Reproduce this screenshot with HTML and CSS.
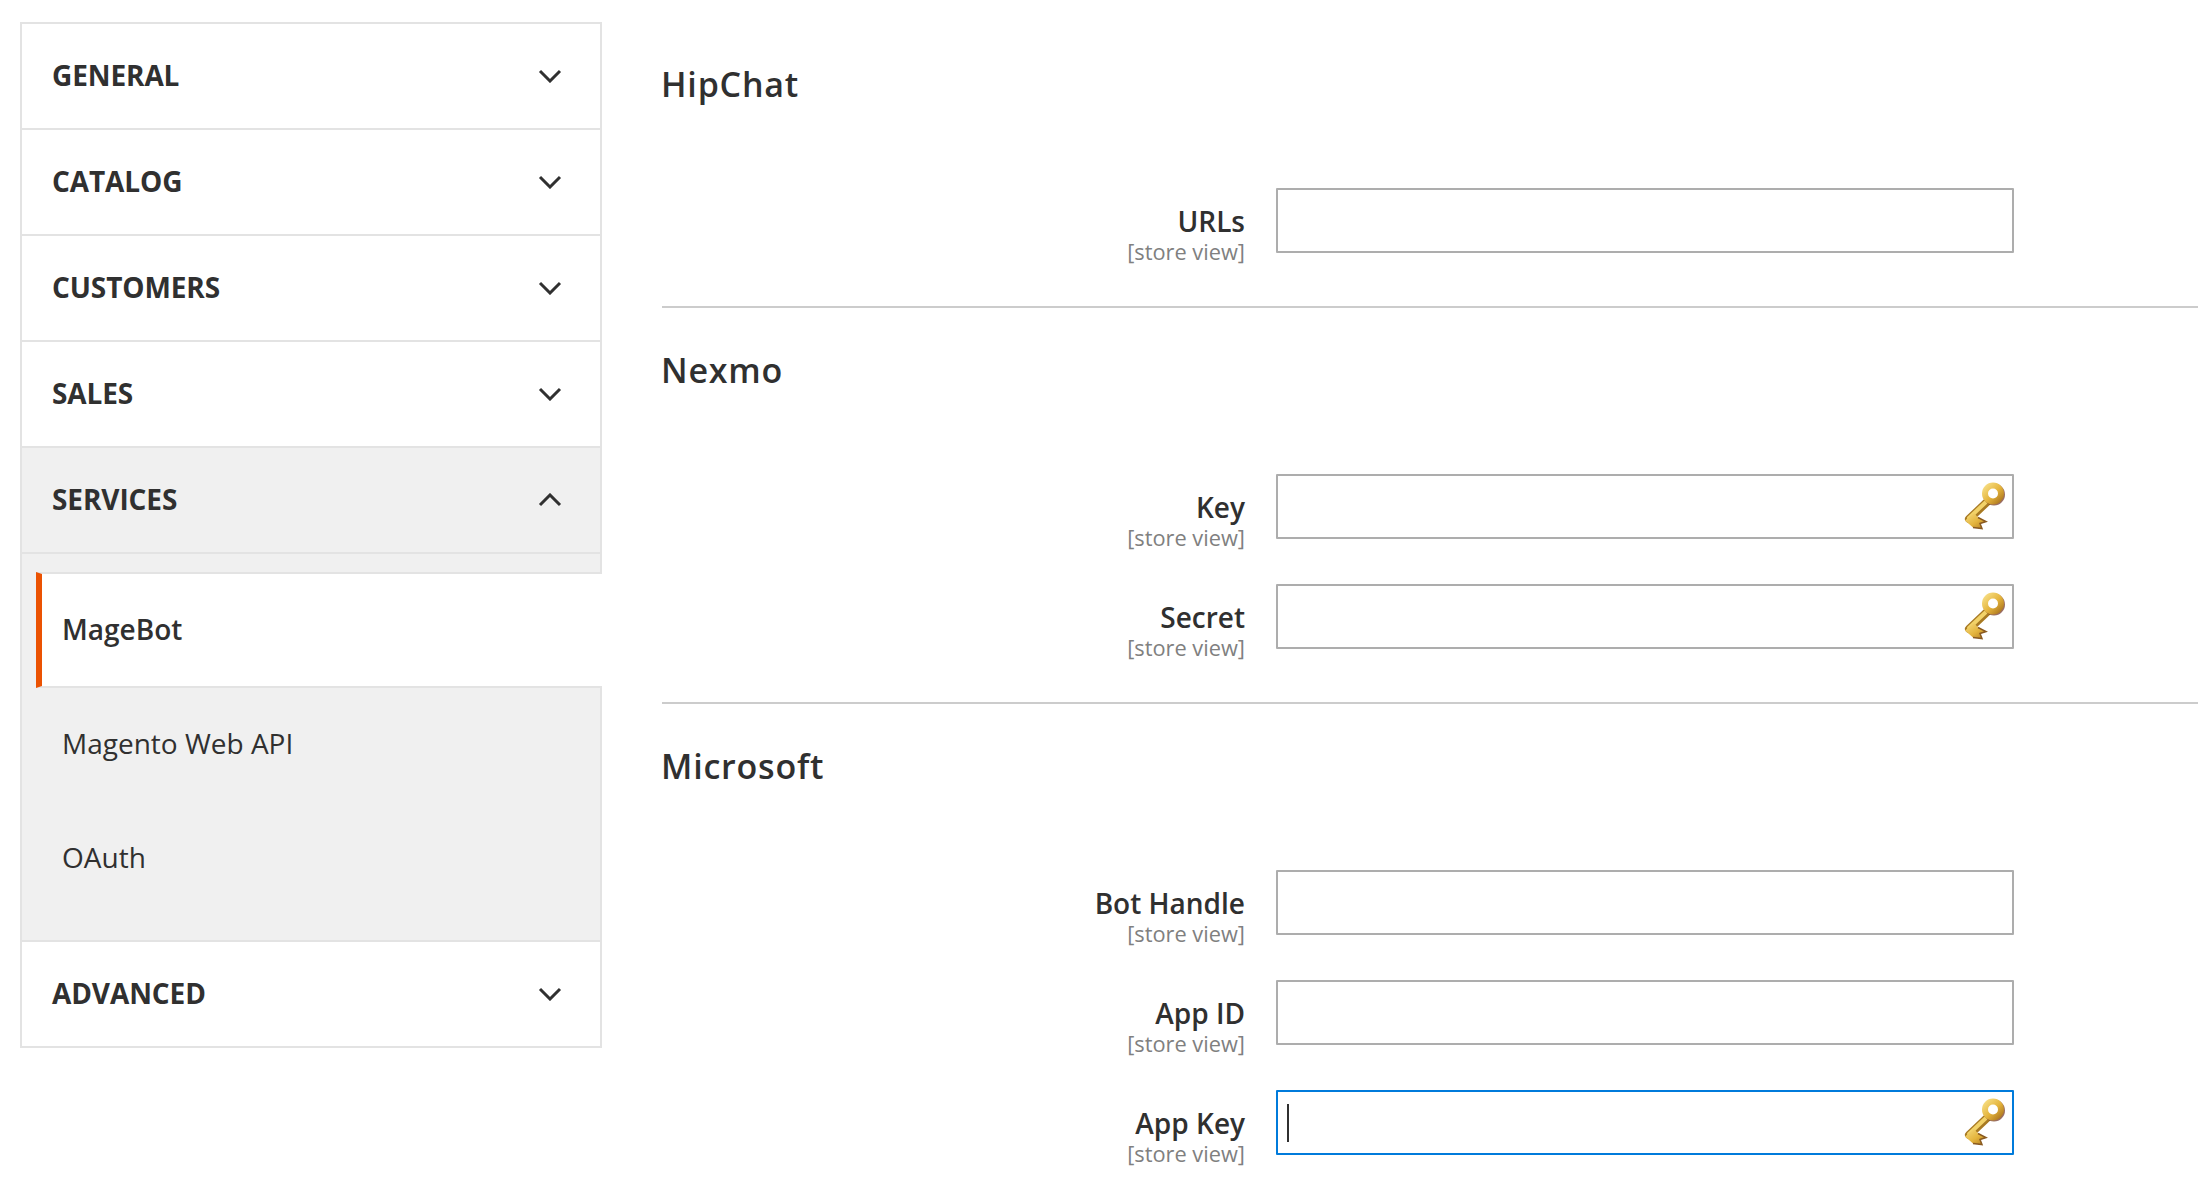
FILE: index.html
```html
<!DOCTYPE html>
<html>
  <head>
    <title>Configuration</title>
    <link rel="stylesheet" href="styles.css">
  </head>
  <body>
    <svg class="defs" width="0" height="0">
      <defs>
        <linearGradient id="keyGold" x1="0" y1="0" x2="1" y2="1">
          <stop offset="0" stop-color="#f6dc80" />
          <stop offset="0.55" stop-color="#e4b43c" />
          <stop offset="1" stop-color="#b07a20" />
        </linearGradient>
        <filter id="keySoft">
          <feGaussianBlur stdDeviation="0.5" />
        </filter>
        <symbol id="key" viewBox="0 0 44 50">
          <g filter="url(#keySoft)">
            <path d="M25 20 L7 37" stroke="#a87a24" stroke-width="8" stroke-linecap="round" />
            <path d="M24 20 L7 36" stroke="#f2d268" stroke-width="4" stroke-linecap="round" />
            <path d="M3 38.500 L12 31 L16 35.500 L24 39.500 L18 41.500 L20 46.500 L11 45.500 Z" fill="url(#keyGold)" />
            <path d="M16 35.500 L24 39.500 L18 41.500 L20 46.500 L11 45.500" fill="none" stroke="#8a5a20" stroke-width="1.500" />
            <circle cx="32" cy="12.500" r="9" fill="none" stroke="#6d2f22" stroke-width="4" opacity="0.7" />
            <circle cx="31" cy="11.500" r="8" fill="#fff" stroke="url(#keyGold)" stroke-width="6" />
          </g>
        </symbol>
      </defs>
    </svg>

    <div class="page">
      <div class="sidebar">
        <div class="nav-row">GENERAL <svg class="chevron"><path d="M2 2 L12 12 L22 2" /></svg></div>
        <div class="nav-row">CATALOG <svg class="chevron"><path d="M2 2 L12 12 L22 2" /></svg></div>
        <div class="nav-row">CUSTOMERS <svg class="chevron"><path d="M2 2 L12 12 L22 2" /></svg></div>
        <div class="nav-row">SALES <svg class="chevron"><path d="M2 2 L12 12 L22 2" /></svg></div>
        <div class="nav-row open">SERVICES <svg class="chevron"><path d="M2 12 L12 2 L22 12" /></svg></div>
        <ul class="submenu">
          <li class="active">MageBot</li>
          <li>Magento Web API</li>
          <li>OAuth</li>
        </ul>
        <div class="nav-row">ADVANCED <svg class="chevron"><path d="M2 2 L12 12 L22 2" /></svg></div>
      </div>

      <div class="main">
        <div class="section">
          <h2>HipChat</h2>
          <div class="form-row">
            <div class="label">URLs<span>[store view]</span></div>
            <div class="field"></div>
          </div>
        </div>

        <div class="section">
          <h2>Nexmo</h2>
          <div class="form-row">
            <div class="label">Key<span>[store view]</span></div>
            <div class="field"><svg class="key"><use href="#key" /></svg></div>
          </div>
          <div class="form-row">
            <div class="label">Secret<span>[store view]</span></div>
            <div class="field"><svg class="key"><use href="#key" /></svg></div>
          </div>
        </div>

        <div class="section last">
          <h2>Microsoft</h2>
          <div class="form-row">
            <div class="label">Bot Handle<span>[store view]</span></div>
            <div class="field"></div>
          </div>
          <div class="form-row">
            <div class="label">App ID<span>[store view]</span></div>
            <div class="field"></div>
          </div>
          <div class="form-row">
            <div class="label">App Key<span>[store view]</span></div>
            <div class="field focus"><i class="caret"></i><svg class="key"><use href="#key" /></svg></div>
          </div>
        </div>
      </div>
    </div>
  </body>
</html>
```

FILE: styles.css
```css
/* Base styles */
html,
body {
  height: 100%;
  overflow: hidden;
}

body {
  margin: 0;
  background: #fff;
  color: #303030;
  font-family: "Open Sans", "Noto Sans", sans-serif;
}

.defs {
  display: block;
}

.page {
  display: flex;
  align-items: flex-start;
  padding-left: 20px;
  padding-top: 22px;
}

/* Left menu */
.sidebar {
  box-sizing: border-box;
  flex: none;
  width: 582px;
  border: 2px solid #e3e3e3;
  border-bottom-width: 0;
}

.nav-row {
  box-sizing: border-box;
  display: flex;
  align-items: center;
  justify-content: space-between;
  height: 106px;
  padding: 0 38px 2px 30px;
  border-bottom: 2px solid #e3e3e3;
  font-size: 28px;
  font-weight: 700;
  letter-spacing: -0.1px;
}

.nav-row.open {
  background: #f0f0f0;
}

.chevron {
  width: 24px;
  height: 14px;
  margin-top: 2px;
}

.chevron path {
  fill: none;
  stroke: #303030;
  stroke-width: 3;
}

.submenu {
  margin: 0;
  padding: 18px 0 24px 14px;
  background: #f0f0f0;
  border-bottom: 2px solid #e3e3e3;
  list-style-type: none;
}

.submenu li {
  box-sizing: border-box;
  display: flex;
  align-items: center;
  height: 114px;
  padding-left: 26px;
  padding-bottom: 5px;
  font-size: 28px;
}

.submenu li.active {
  height: 116px;
  margin-right: -2px;
  padding-left: 20px;
  padding-bottom: 3px;
  background: #fff;
  border-left: 6px solid #eb5202;
  border-top: 2px solid #e3e3e3;
  border-bottom: 2px solid #e3e3e3;
  font-weight: 600;
}

/* Config sections */
.main {
  flex: 1;
  margin-left: 60px;
}

.section {
  padding-bottom: 53px;
  border-bottom: 2px solid #cccccc;
}

.section.last {
  border-bottom: none;
}

.section h2 {
  box-sizing: border-box;
  height: 166px;
  margin: 0 0 0 -1px;
  padding-top: 40px;
  font-size: 34px;
  font-weight: 600;
  line-height: 44px;
  letter-spacing: 0.8px;
}

.form-row {
  display: grid;
  grid-template-columns: 583px 738px;
  column-gap: 31px;
  height: 65px;
  margin-bottom: 45px;
}

.form-row:last-child {
  margin-bottom: 0;
}

.label {
  padding-top: 14px;
  font-size: 28px;
  font-weight: 600;
  line-height: 38px;
  text-align: right;
}

.label span {
  display: block;
  color: #808080;
  font-size: 21.8px;
  font-weight: 400;
  line-height: 23px;
}

.field {
  box-sizing: border-box;
  display: flex;
  align-items: center;
  justify-content: flex-end;
  height: 65px;
  padding-right: 6px;
  background: #fff;
  border: 2px solid #adadad;
  border-radius: 1px;
}

.field.focus {
  justify-content: space-between;
  padding-left: 9px;
  border-color: #007bdb;
}

.caret {
  width: 2px;
  height: 38px;
  background: #303030;
}

.key {
  width: 44px;
  height: 50px;
}
```
